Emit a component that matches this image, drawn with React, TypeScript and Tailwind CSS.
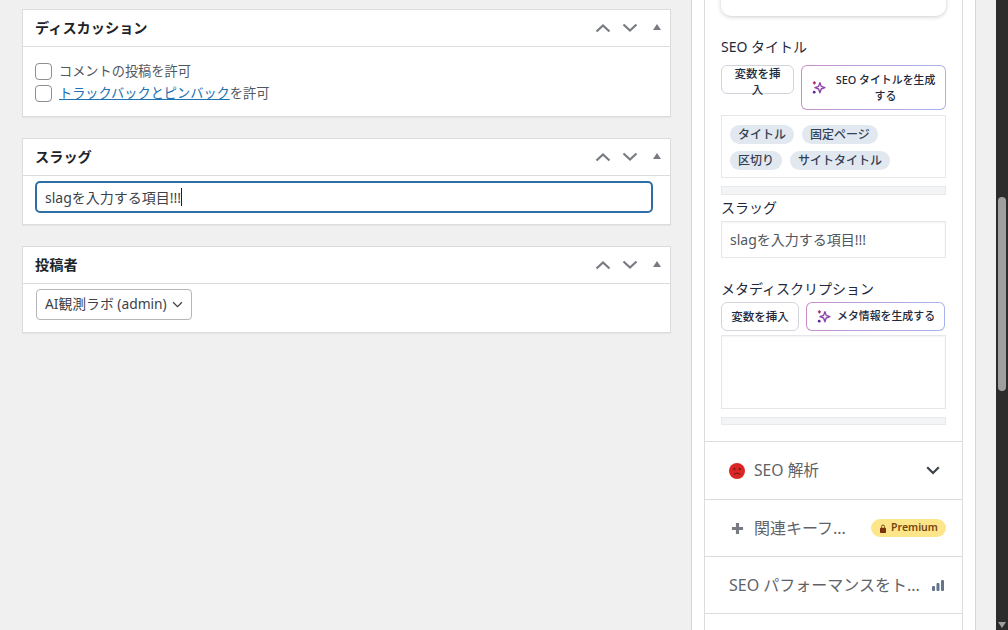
const font = '"Noto Sans", "Noto Sans CJK JP", sans-serif';

function Sparkle({ className }: { className: string }) {
  return (
    <svg viewBox="0 0 16 16" className={className} fill="none">
      <path d="M9.5 2.8 L10.9 6.8 L14.8 8.2 L10.9 9.6 L9.5 13.6 L8.1 9.6 L4.2 8.2 L8.1 6.8 Z" stroke="#8e44ad" strokeWidth="1.5" strokeLinejoin="round" />
      <path d="M3.6 1.4v3.4M1.9 3.1h3.4" stroke="#a4286a" strokeWidth="1.4" />
      <circle cx="3.4" cy="13" r="1.5" fill="#5b2a9d" />
    </svg>
  );
}

function PostboxControls() {
  return (
    <div className="flex items-center">
      <svg viewBox="0 0 16 10" className="w-[16px] h-[10px] mr-[11px]" fill="none">
        <path d="M1.5 8.5 L8 2.5 L14.5 8.5" stroke="#787c82" strokeWidth="2.2" />
      </svg>
      <svg viewBox="0 0 16 10" className="w-[16px] h-[10px] mr-[15px]" fill="none">
        <path d="M1.5 1.5 L8 7.5 L14.5 1.5" stroke="#787c82" strokeWidth="2.2" />
      </svg>
      <svg viewBox="0 0 8 6" className="w-[8px] h-[6px] mb-[2px]">
        <path d="M4 0 L8 6 H0 Z" fill="#787c82" />
      </svg>
    </div>
  );
}

function Postbox({ title, height, children }: { title: string; height: string; children: React.ReactNode }) {
  return (
    <div className={`bg-white border border-[#dcdcde] shadow-[0_1px_1px_rgba(0,0,0,0.04)] ${height}`}>
      <div className="h-[37px] border-b border-[#dcdcde] flex items-center justify-between pl-[12px] pr-[9px]">
        <h2 className="text-[14.2px] font-bold text-[#1d2327]">{title}</h2>
        <PostboxControls />
      </div>
      {children}
    </div>
  );
}

function Checkbox() {
  return <span className="w-[17px] h-[17px] rounded-[4px] border border-[#8c8f94] bg-white shrink-0" />;
}

function Tag({ children }: { children: React.ReactNode }) {
  return (
    <span className="h-[19px] px-[8px] rounded-full bg-[#e2e8f0] text-[12px] font-medium text-[#334155] flex items-center">
      {children}
    </span>
  );
}

export default function App() {
  return (
    <div className="w-[1008px] h-[630px] overflow-hidden flex bg-[#f0f0f1]" style={{ fontFamily: font }}>
      <main className="w-[691px] pl-[22px] pr-[20px] pt-[9px] flex flex-col gap-[21px] shrink-0">
        <Postbox title="ディスカッション" height="h-[108px]">
          <div className="pl-[12px] pt-[15px] flex flex-col gap-[3px] text-[13.2px] text-[#50575e] leading-[19px]">
            <label className="flex items-center gap-[7px]">
              <Checkbox />
              コメントの投稿を許可
            </label>
            <label className="flex items-center gap-[7px]">
              <Checkbox />
              <span>
                <a className="text-[#2271b1] underline">トラックバックとピンバック</a>を許可
              </span>
            </label>
          </div>
        </Postbox>
        <Postbox title="スラッグ" height="h-[87px]">
          <div className="pl-[12px] pr-[17px] pt-[5px]">
            <div className="h-[32px] rounded-[5px] border-2 border-[#2f6fa5] bg-white flex items-center pl-[8px] text-[14px] text-[#3c434a]">
              slagを入力する項目!!!
              <span className="w-px h-[18px] bg-[#1d2327]" />
            </div>
          </div>
        </Postbox>
        <Postbox title="投稿者" height="h-[87px]">
          <div className="pl-[13px] pt-[5px]">
            <div className="inline-flex h-[31px] w-[156px] items-center justify-between rounded-[4px] border border-[#b4b6b9] bg-white pl-[8px] pr-[8px] text-[13.8px] text-[#3c434a]">
              <span className="whitespace-nowrap">AI観測ラボ (admin)</span>
              <svg viewBox="0 0 12 8" className="w-[11px] h-[7px] shrink-0" fill="none">
                <path d="M1 1.5 L6 6.5 L11 1.5" stroke="#3c434a" strokeWidth="1.5" />
              </svg>
            </div>
          </div>
        </Postbox>
      </main>

      <aside className="w-[285px] bg-white border-x border-[#d5d6d8] pl-[12px] shrink-0 overflow-hidden">
        <div className="w-[259px] h-[660px] bg-white border-x border-[#dcdcde] -mt-[30px]">
          <div className="px-[16px]">
            <div className="h-[46px] rounded-[10px] bg-white shadow-[0_1px_4px_rgba(0,0,0,0.2)]" />

            <div className="mt-[21px] text-[14px] text-[#1e293b] leading-[20px]">SEO タイトル</div>
            <div className="mt-[8px] flex gap-[7px] items-start">
              <button className="w-[73px] h-[29px] px-[12px] rounded-[6px] border border-[#d1d5db] bg-white text-[11.5px] font-medium text-[#1e293b] leading-[16px]">
                変数を挿入
              </button>
              <div className="w-[145px] h-[45px] rounded-[6px] p-px bg-[linear-gradient(100deg,#c98bc4,#b9a4e0,#a5b4f0)]">
                <button className="w-full h-full rounded-[5px] bg-white text-[10.9px] font-medium text-[#1e293b] leading-[16px] flex items-center pl-[9px] pr-[8px]">
                  <Sparkle className="w-[15px] h-[15px] shrink-0" />
                  <span className="flex-1 pl-[8px] text-center">SEO タイトルを生成する</span>
                </button>
              </div>
            </div>
            <div className="mt-[5px] h-[63px] border border-[#e5e7eb] bg-white px-[8px] pt-[9px] flex flex-wrap content-start gap-x-[8px] gap-y-[7px]">
              <Tag>タイトル</Tag>
              <Tag>固定ページ</Tag>
              <Tag>区切り</Tag>
              <Tag>サイトタイトル</Tag>
            </div>
            <div className="mt-[8px] h-[9px] border border-[#e9e9e9] bg-[#f3f4f6]" />

            <div className="mt-[3px] text-[14px] text-[#1e293b] leading-[20px]">スラッグ</div>
            <div className="mt-[3px] h-[37px] border border-[#e5e7eb] bg-white flex items-center pl-[8px] text-[14px] text-[#50575e] shadow-[inset_0_1px_2px_rgba(0,0,0,0.05)]">
              slagを入力する項目!!!
            </div>

            <div className="mt-[21px] text-[14px] text-[#1e293b] leading-[20px]">メタディスクリプション</div>
            <div className="mt-[3px] flex gap-[7px]">
              <button className="w-[78px] h-[29px] rounded-[6px] border border-[#d1d5db] bg-white text-[11.5px] font-medium text-[#1e293b] whitespace-nowrap">
                変数を挿入
              </button>
              <div className="w-[139px] h-[29px] rounded-[6px] p-px bg-[linear-gradient(100deg,#c98bc4,#b9a4e0,#a5b4f0)]">
                <button className="w-full h-full rounded-[5px] bg-white text-[10.9px] font-medium text-[#1e293b] whitespace-nowrap flex items-center pl-[9px] gap-[6px]">
                  <Sparkle className="w-[15px] h-[15px] shrink-0" />
                  メタ情報を生成する
                </button>
              </div>
            </div>
            <div className="mt-[4px] h-[74px] border border-[#e5e7eb] bg-white shadow-[inset_0_1px_2px_rgba(0,0,0,0.05)]" />
            <div className="mt-[8px] h-[8px] border border-[#e9e9e9] bg-[#f3f4f6]" />
          </div>

          <div className="mt-[16px] border-t border-[#dcdcde]">
            <div className="h-[58px] border-b border-[#dcdcde] flex items-center pl-[24px] pr-[21px] text-[15.7px] text-[#5f6368]">
              <svg viewBox="0 0 16 16" className="w-[16px] h-[16px] shrink-0 mr-[9px]">
                <circle cx="8" cy="8" r="8" fill="#dc2626" />
                <circle cx="5.3" cy="6" r="1.2" fill="#7f1d1d" />
                <circle cx="10.7" cy="6" r="1.2" fill="#7f1d1d" />
                <path d="M4.8 11.5 Q8 8.6 11.2 11.5" stroke="#7f1d1d" strokeWidth="1.2" fill="none" />
              </svg>
              <span className="flex-1">SEO 解析</span>
              <svg viewBox="0 0 14 9" className="w-[14px] h-[9px] mr-[1px]" fill="none">
                <path d="M1.2 1.2 L7 7 L12.8 1.2" stroke="#3c434a" strokeWidth="2.2" />
              </svg>
            </div>
            <div className="h-[57px] border-b border-[#dcdcde] flex items-center pl-[26px] pr-[16px] text-[16px] text-[#5f6368]">
              <svg viewBox="0 0 14 14" className="w-[13px] h-[13px] shrink-0 mr-[10px]">
                <path d="M7 1v12M1 7h12" stroke="#787c82" strokeWidth="3.4" />
              </svg>
              <span className="flex-1 whitespace-nowrap">関連キーフ...</span>
              <span className="w-[75px] h-[18px] rounded-full bg-[#fde68a] text-[10.5px] font-semibold text-[#78450f] flex items-center justify-center gap-[4px]">
                <svg viewBox="0 0 10 12" className="w-[8px] h-[9px]">
                  <rect x="1" y="5" width="8" height="7" rx="1" fill="#78350f" />
                  <path d="M3 5V3.4a2 2 0 0 1 4 0V5" stroke="#78350f" strokeWidth="1.2" fill="none" />
                </svg>
                Premium
              </span>
            </div>
            <div className="h-[57px] border-b border-[#dcdcde] flex items-center pl-[24px] pr-[18px] text-[16px] text-[#5f6368]">
              <span className="flex-1 whitespace-nowrap">SEO パフォーマンスをト...</span>
              <svg viewBox="0 0 12 11" className="w-[12px] h-[11px]">
                <rect x="0" y="6" width="3" height="5" rx="1" fill="#64748b" />
                <rect x="4.5" y="3" width="3" height="8" rx="1" fill="#64748b" />
                <rect x="9" y="0" width="3" height="11" rx="1" fill="#64748b" />
              </svg>
            </div>
          </div>
        </div>
      </aside>

      <div className="flex-1" />

      <div className="w-[12px] shrink-0 bg-[#2c2c2c] relative">
        <div className="absolute left-[2px] top-[197px] w-[8px] h-[194px] rounded-full bg-[#9f9f9f]" />
        <svg viewBox="0 0 8 6" className="absolute left-[2px] bottom-[2px] w-[8px] h-[6px]">
          <path d="M0 0 H8 L4 6 Z" fill="#9f9f9f" />
        </svg>
      </div>
    </div>
  );
}
